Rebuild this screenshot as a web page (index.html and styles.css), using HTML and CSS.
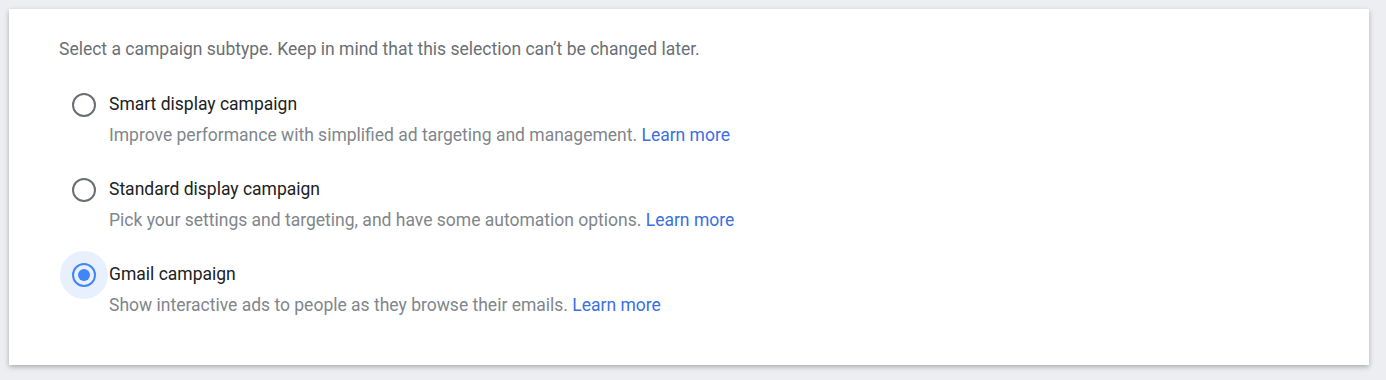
FILE: index.html
```html
<!DOCTYPE html>
<html lang="en">
<head>
  <meta charset="UTF-8">
  <title>Campaign subtype</title>
  <link rel="stylesheet" href="styles.css">
</head>
<body>
  <div class="card">
    <p class="intro">Select a campaign subtype. Keep in mind that this selection can’t be changed later.</p>

    <div class="option">
      <div class="radio-wrap"><span class="radio"></span></div>
      <div class="option-text">
        <div class="label">Smart display campaign</div>
        <div class="desc">Improve performance with simplified ad targeting and management. <a href="#">Learn more</a></div>
      </div>
    </div>

    <div class="option">
      <div class="radio-wrap"><span class="radio"></span></div>
      <div class="option-text">
        <div class="label">Standard display campaign</div>
        <div class="desc">Pick your settings and targeting, and have some automation options. <a href="#">Learn more</a></div>
      </div>
    </div>

    <div class="option">
      <div class="radio-wrap selected"><span class="radio checked"></span></div>
      <div class="option-text">
        <div class="label">Gmail campaign</div>
        <div class="desc">Show interactive ads to people as they browse their emails. <a href="#">Learn more</a></div>
      </div>
    </div>
  </div>
</body>
</html>
```

FILE: styles.css
```css
body {
  margin: 0;
  padding: 9px 17px 0 9px;
  background: #eceef1;
  font-family: Roboto, "Liberation Sans", sans-serif;
  height: 380px;
  box-sizing: border-box;
  overflow: hidden;
}
.card {
  background: #fff;
  height: 356px;
  box-sizing: border-box;
  padding: 28px 50px 0 50px;
  box-shadow: 0 2px 5px rgba(0, 0, 0, 0.28);
}
.intro {
  margin: 0 0 20px 0;
  font-size: 17.5px;
  line-height: 24px;
  color: #6b6f74;
}
.option {
  display: flex;
  align-items: flex-start;
  margin-left: 1px;
  height: 85px;
}
.radio-wrap {
  width: 48px;
  height: 48px;
  border-radius: 50%;
  display: flex;
  align-items: center;
  justify-content: center;
  flex-shrink: 0;
}
.radio-wrap.selected {
  background: #e8f0fe;
}
.radio {
  width: 24px;
  height: 24px;
  box-sizing: border-box;
  border: 2px solid #6b6f74;
  border-radius: 50%;
  display: flex;
  align-items: center;
  justify-content: center;
}
.radio.checked {
  border-color: #4285f4;
}
.radio.checked::after {
  content: "";
  width: 12px;
  height: 12px;
  border-radius: 50%;
  background: #4285f4;
}
.option-text {
  padding-top: 11px;
  margin-left: 1px;
}
.label {
  font-size: 17.5px;
  line-height: 24px;
  color: #202124;
}
.desc {
  margin-top: 7px;
  font-size: 17.5px;
  line-height: 24px;
  color: #80868b;
}
.desc a {
  color: #3b6fe0;
  text-decoration: none;
}
```
